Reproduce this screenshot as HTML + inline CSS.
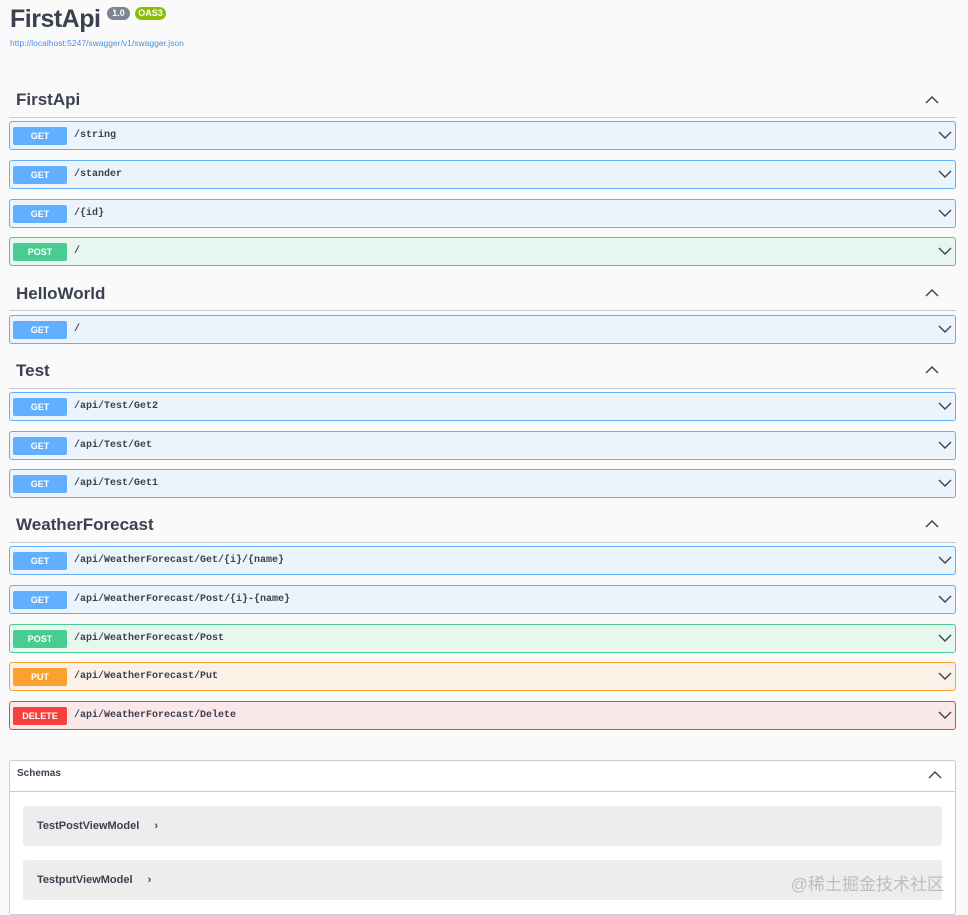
<!DOCTYPE html>
<html><head><meta charset="utf-8"><style>
*{box-sizing:border-box;margin:0;padding:0}
body{width:968px;height:915px;background:#fafafa;font-family:"Liberation Sans",sans-serif;color:#3b4151;position:relative;overflow:hidden}
.a{position:absolute}
.title{left:10px;top:5px;font-size:25px;font-weight:bold;color:#3b4151;letter-spacing:-0.5px}
.ver{left:107px;top:7px;height:13px;width:23px;background:#7d8492;border-radius:7px;color:#fff;font-size:9px;font-weight:bold;text-align:center;line-height:13px}
.oas{left:135px;top:7px;height:13px;width:31px;background:#89bf04;border-radius:7px;color:#fff;font-size:9px;font-weight:bold;text-align:center;line-height:13px}
.url{left:10px;top:38px;font-size:8.5px;color:#4990e2}
.tag{left:16px;font-size:17px;font-weight:bold;color:#3b4151}
.line{left:9px;width:947px;height:1px;background:#c9ccd1}
.up{left:925px;width:14px;height:10px}
.row{left:9px;width:947px;height:29px;border:1px solid;border-radius:3px}
.row .b{position:absolute;left:3px;top:5px;width:54px;height:18px;border-radius:2px;color:#fff;font-size:9px;font-weight:bold;text-align:center;line-height:18px}
.row .p{position:absolute;left:64px;top:8px;font-family:"Liberation Mono",monospace;font-weight:bold;font-size:10px;color:#3b4151}
.row svg{position:absolute;right:3px;top:8px}
.get{background:#ebf3fb;border-color:#61affe}.get .b{background:#61affe}
.post{background:#e8f6f0;border-color:#49cc90}.post .b{background:#49cc90}
.put{background:#fbf1e6;border-color:#fca130}.put .b{background:#fca130}
.del{background:#fae7e7;border-color:#f93e3e}.del .b{background:#f93e3e}
.sch{left:9px;top:760px;width:947px;height:155px;border:1px solid #c9ccd1;border-radius:3px;background:#fff}
.si{left:23px;width:919px;height:40px;background:#ededed;border-radius:3px;font-size:11px;font-weight:bold;color:#3b4151;padding:14px 0 0 14px}
.wm{right:24px;top:870px;font-size:17px;color:#bdbdbd;font-family:"Liberation Sans","Noto Sans CJK SC",sans-serif}
</style></head><body>
<div class="a title">FirstApi</div>
<div class="a ver">1.0</div>
<div class="a oas">OAS3</div>
<div class="a url">http://localhost:5247/swagger/v1/swagger.json</div>

<div class="a tag" style="top:90px">FirstApi</div>
<div class="a line" style="top:117px"></div>
<svg class="a up" style="top:95px" viewBox="0 0 14 10"><path d="M1 8L7 2L13 8" fill="none" stroke="#3b4151" stroke-width="1.4"/></svg>

<div class="a tag" style="top:284px">HelloWorld</div>
<div class="a line" style="top:310px"></div>
<svg class="a up" style="top:288px" viewBox="0 0 14 10"><path d="M1 8L7 2L13 8" fill="none" stroke="#3b4151" stroke-width="1.4"/></svg>

<div class="a tag" style="top:361px">Test</div>
<div class="a line" style="top:388px"></div>
<svg class="a up" style="top:365px" viewBox="0 0 14 10"><path d="M1 8L7 2L13 8" fill="none" stroke="#3b4151" stroke-width="1.4"/></svg>

<div class="a tag" style="top:515px">WeatherForecast</div>
<div class="a line" style="top:542px"></div>
<svg class="a up" style="top:519px" viewBox="0 0 14 10"><path d="M1 8L7 2L13 8" fill="none" stroke="#3b4151" stroke-width="1.4"/></svg>

<div class="a row get" style="top:121px"><span class="b">GET</span><span class="p">/string</span><svg width="14" height="10" viewBox="0 0 14 10"><path d="M1 2L7 8L13 2" fill="none" stroke="#3b4151" stroke-width="1.4"/></svg></div>
<div class="a row get" style="top:160px"><span class="b">GET</span><span class="p">/stander</span><svg width="14" height="10" viewBox="0 0 14 10"><path d="M1 2L7 8L13 2" fill="none" stroke="#3b4151" stroke-width="1.4"/></svg></div>
<div class="a row get" style="top:199px"><span class="b">GET</span><span class="p">/{id}</span><svg width="14" height="10" viewBox="0 0 14 10"><path d="M1 2L7 8L13 2" fill="none" stroke="#3b4151" stroke-width="1.4"/></svg></div>
<div class="a row post" style="top:237px"><span class="b">POST</span><span class="p">/</span><svg width="14" height="10" viewBox="0 0 14 10"><path d="M1 2L7 8L13 2" fill="none" stroke="#3b4151" stroke-width="1.4"/></svg></div>
<div class="a row get" style="top:315px"><span class="b">GET</span><span class="p">/</span><svg width="14" height="10" viewBox="0 0 14 10"><path d="M1 2L7 8L13 2" fill="none" stroke="#3b4151" stroke-width="1.4"/></svg></div>
<div class="a row get" style="top:392px"><span class="b">GET</span><span class="p">/api/Test/Get2</span><svg width="14" height="10" viewBox="0 0 14 10"><path d="M1 2L7 8L13 2" fill="none" stroke="#3b4151" stroke-width="1.4"/></svg></div>
<div class="a row get" style="top:431px"><span class="b">GET</span><span class="p">/api/Test/Get</span><svg width="14" height="10" viewBox="0 0 14 10"><path d="M1 2L7 8L13 2" fill="none" stroke="#3b4151" stroke-width="1.4"/></svg></div>
<div class="a row get" style="top:469px"><span class="b">GET</span><span class="p">/api/Test/Get1</span><svg width="14" height="10" viewBox="0 0 14 10"><path d="M1 2L7 8L13 2" fill="none" stroke="#3b4151" stroke-width="1.4"/></svg></div>
<div class="a row get" style="top:546px"><span class="b">GET</span><span class="p">/api/WeatherForecast/Get/{i}/{name}</span><svg width="14" height="10" viewBox="0 0 14 10"><path d="M1 2L7 8L13 2" fill="none" stroke="#3b4151" stroke-width="1.4"/></svg></div>
<div class="a row get" style="top:585px"><span class="b">GET</span><span class="p">/api/WeatherForecast/Post/{i}-{name}</span><svg width="14" height="10" viewBox="0 0 14 10"><path d="M1 2L7 8L13 2" fill="none" stroke="#3b4151" stroke-width="1.4"/></svg></div>
<div class="a row post" style="top:624px"><span class="b">POST</span><span class="p">/api/WeatherForecast/Post</span><svg width="14" height="10" viewBox="0 0 14 10"><path d="M1 2L7 8L13 2" fill="none" stroke="#3b4151" stroke-width="1.4"/></svg></div>
<div class="a row put" style="top:662px"><span class="b">PUT</span><span class="p">/api/WeatherForecast/Put</span><svg width="14" height="10" viewBox="0 0 14 10"><path d="M1 2L7 8L13 2" fill="none" stroke="#3b4151" stroke-width="1.4"/></svg></div>
<div class="a row del" style="top:701px"><span class="b">DELETE</span><span class="p">/api/WeatherForecast/Delete</span><svg width="14" height="10" viewBox="0 0 14 10"><path d="M1 2L7 8L13 2" fill="none" stroke="#3b4151" stroke-width="1.4"/></svg></div>

<div class="a sch"></div>
<div class="a" style="left:17px;top:768px;font-size:10px;font-weight:bold;color:#3b4151">Schemas</div>
<svg class="a up" style="top:770px;left:928px" viewBox="0 0 14 10"><path d="M1 8L7 2L13 8" fill="none" stroke="#3b4151" stroke-width="1.4"/></svg>
<div class="a line" style="top:791px;left:10px;width:945px"></div>
<div class="a si" style="top:806px">TestPostViewModel <span style="margin-left:12px">›</span></div>
<div class="a si" style="top:860px">TestputViewModel <span style="margin-left:12px">›</span></div>
<div class="a wm">@稀土掘金技术社区</div>
</body></html>
